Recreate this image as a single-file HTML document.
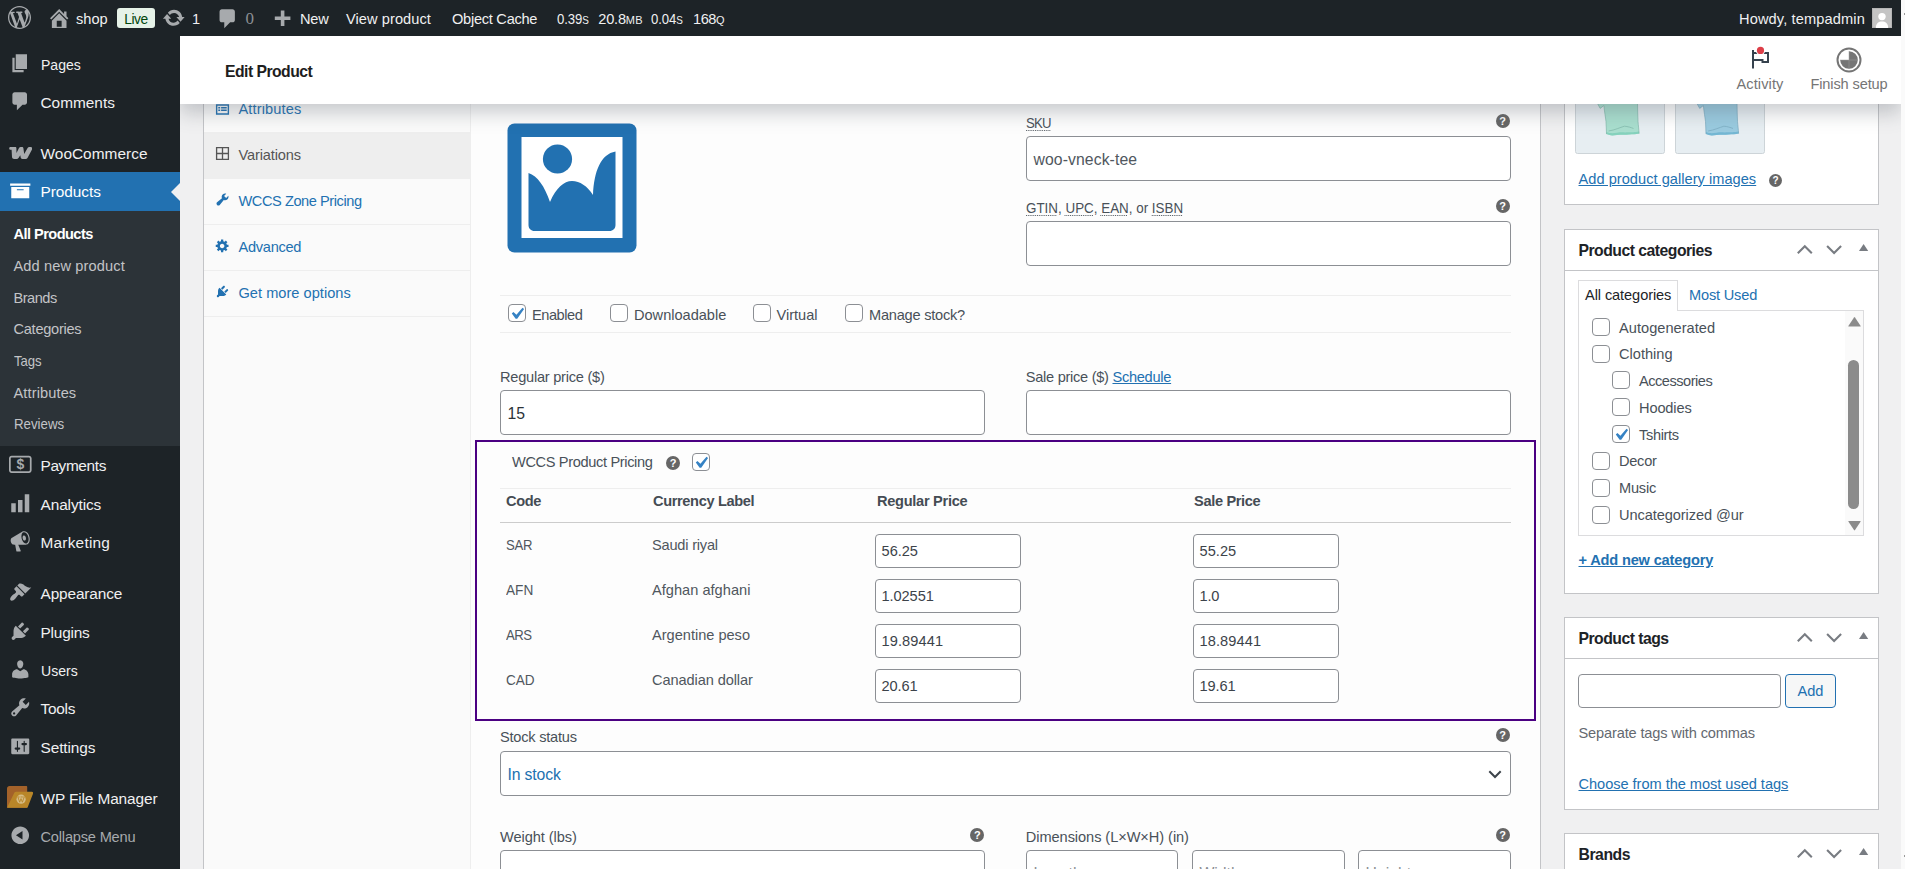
<!DOCTYPE html>
<html lang="en"><head>
<meta charset="utf-8">
<title>Edit product “V-Neck T-Shirt” ‹ shop — WordPress</title>
<style>
*{box-sizing:border-box;margin:0;padding:0}
html,body{width:1905px;height:869px;overflow:hidden;background:#fafafa;font-family:"Liberation Sans",sans-serif;color:#3c434a}
#root{position:absolute;left:0;top:0;width:1901px;height:869px;overflow:hidden;background:#f0f0f1}
a{color:#2271b1}
svg{display:block}
/* ---------- admin bar ---------- */
#wpadminbar{position:absolute;left:0;top:0;width:1901px;height:36px;background:#1d2327;color:#f0f0f1;font-size:14.6px;z-index:30}
#wpadminbar .t{position:absolute;top:0;line-height:39px;white-space:nowrap;color:#f0f0f1}
#wpadminbar .ic{position:absolute}
#wpadminbar .live{position:absolute;left:117px;top:8px;width:38px;height:20px;border-radius:3px;background:#e6f2e8;color:#00450c;font-size:13.8px;line-height:23px;text-align:center}
#wpadminbar .dim{color:#a7aaad}
#wpadminbar small{font-size:11px;letter-spacing:.2px}
/* ---------- side menu ---------- */
#adminmenu{position:absolute;left:0;top:36px;width:180px;height:833px;background:#1d2327;z-index:20}
#adminmenu .mi{position:absolute;left:0;width:180px;height:38px;color:#f0f0f1;font-size:15.4px;line-height:40.4px;white-space:nowrap}
#adminmenu .mi span{position:absolute;left:40.5px;top:0}
#adminmenu .mi svg{position:absolute;left:9px;top:7px;width:22.5px;height:22.5px;fill:#a7aaad}
#adminmenu .cur{background:#2271b1;color:#fff}
#adminmenu .cur svg{fill:#fff}
#adminmenu .cur:after{content:"";position:absolute;right:0;top:10.5px;border:9px solid transparent;border-right-color:#f0f0f1}
#adminmenu .sub{position:absolute;left:0;top:174.5px;width:180px;height:235.5px;background:#2c3338}
#adminmenu .sub div{position:absolute;left:13.5px;margin-top:.5px;font-size:14.6px;color:#c3c4c7;white-space:nowrap;line-height:20px}
#adminmenu .sub div.on{color:#fff;font-weight:bold}
/* ---------- woo header ---------- */
#woohead{position:absolute;left:180px;top:36px;width:1721px;height:68px;background:#fff;z-index:10;box-shadow:0 9px 18px 0 rgba(85,93,102,.3)}
#woohead h1{position:absolute;left:45px;top:0;line-height:71px;font-size:15.75px;letter-spacing:-.45px;font-weight:bold;color:#1e1e1e;white-space:nowrap}
#woohead .btn{position:absolute;top:0;height:68px;color:#757575;font-size:14.6px;text-align:center;white-space:nowrap}
#woohead .btn span{position:absolute;left:0;right:0;top:38px;line-height:20px}

/* ---------- product data box ---------- */
#pdata{position:absolute;left:203px;top:60px;width:1338px;height:900px;background:#fff;border:1px solid #c3c4c7}
#tabs{position:absolute;left:0;top:0;width:267px;height:900px;background:#fafafa;border-right:1px solid #eee}
#tabs .tab{position:absolute;left:0;width:266px;height:46px;border-bottom:1px solid #eee;color:#2271b1;font-size:14.6px;line-height:45px;white-space:nowrap}
#tabs .tab span{position:absolute;left:34.500px;top:0}
#tabs .tab svg{position:absolute;left:10.8px;top:12.8px;width:15px;height:15px;fill:#2271b1}
#tabs .tab.act{background:#eee;color:#555}
#tabs .tab.act svg{fill:#555}
#panel{position:absolute;left:267px;top:0;width:1069px;height:900px;background:#fdfdfd}
.lbl{position:absolute;font-size:14.6px;color:#495159;white-space:nowrap;line-height:20px}
.lbl u{text-decoration:underline dotted;text-decoration-thickness:1px;text-underline-offset:2px}
.inp{position:absolute;background:#fff;border:1px solid #8c8f94;border-radius:4px;font-size:15.75px;color:#50575e;white-space:nowrap;padding-left:6.5px}
.help{position:absolute;width:14px;height:14px;border-radius:50%;background:#666;color:#fff;font-size:11px;font-weight:bold;line-height:14.5px;text-align:center}
.hr{position:absolute;height:1px;background:#eee}
.cb{position:absolute;width:18px;height:18px;border:1px solid #8c8f94;border-radius:4px;background:#fff}
.cb svg{position:absolute;left:-4.500px;top:-3.400px;width:23.600px;height:23.600px}
#wccs{position:absolute;left:271px;top:379px;width:1061px;height:281px;border:2px solid #4b0082}
#wccs .th{position:absolute;top:47.7px;letter-spacing:-.3px;font-size:14.6px;font-weight:bold;color:#454c54;line-height:20px;white-space:nowrap}
#wccs .td{position:absolute;font-size:14.6px;color:#50575e;line-height:20px;white-space:nowrap}
#wccs .in{position:absolute;width:146px;height:34px;background:#fff;border:1px solid #8c8f94;border-radius:4px;font-size:14.6px;color:#3c434a;line-height:32.6px;padding-left:5.6px}

/* ---------- right column ---------- */
.pbox{position:absolute;left:1564px;width:315px;background:#fff;border:1px solid #c3c4c7}
.pbox .hd{position:absolute;left:0;top:0;width:313px;height:41px;border-bottom:1px solid #c3c4c7}
.pbox h2{position:absolute;left:13.500px;top:0;line-height:41px;font-size:15.75px;font-weight:bold;color:#1d2327;white-space:nowrap}
.pbox .ar{position:absolute;top:13px;left:232px;width:72px;height:14px}
.rt{position:absolute;font-size:14.6px;line-height:20px;white-space:nowrap;color:#495159}
.rt a{text-decoration:underline}
#catlist .cb{width:18px;height:18px}
#catlist .rt{color:#495159}
</style>
</head>
<body>
<div id="root">

<!-- ============ ADMIN BAR ============ -->
<div id="wpadminbar">
  <svg class="ic" style="left:8px;top:6px;width:23px;height:23px" viewBox="0 0 20 20" fill="#a7aaad"><path d="M20 10c0-5.51-4.49-10-10-10C4.48 0 0 4.49 0 10c0 5.52 4.48 10 10 10c5.51 0 10-4.48 10-10zM7.78 15.37L4.37 6.22c.55-.02 1.17-.08 1.17-.08c.5-.06.44-1.13-.06-1.11c0 0-1.45.11-2.37.11c-.18 0-.37 0-.58-.01C4.12 2.69 6.87 1.11 10 1.11c2.33 0 4.45.87 6.05 2.34c-.68-.11-1.65.39-1.65 1.58c0 .74.45 1.36.9 2.1c.35.61.55 1.36.55 2.46c0 1.49-1.4 5-1.4 5l-3.03-8.37c.54-.02.82-.17.82-.17c.5-.05.44-1.25-.06-1.22c0 0-1.44.12-2.38.12c-.87 0-2.33-.12-2.33-.12c-.5-.03-.56 1.2-.06 1.22l.92.08l1.26 3.41zM17.41 10c.24-.64.74-1.87.43-4.25c.7 1.29 1.05 2.71 1.05 4.25c0 3.29-1.73 6.24-4.4 7.78c.97-2.59 1.94-5.2 2.92-7.78zM6.1 18.09C3.12 16.65 1.11 13.53 1.11 10c0-1.3.23-2.48.72-3.59C3.25 10.3 4.67 14.2 6.1 18.09zm4.03-6.63l2.58 6.98c-.86.29-1.76.45-2.71.45c-.79 0-1.57-.11-2.29-.33c.81-2.38 1.62-4.74 2.42-7.1z"></path></svg>
  <svg class="ic" style="left:46.8px;top:5.6px;width:24.4px;height:24.4px" viewBox="0 0 20 20" fill="#a7aaad"><path d="M16 8.5l1.53 1.53-1.06 1.06L10 4.62l-6.47 6.47-1.06-1.06L10 2.5l4 4v-2h2v4zM10 6.04l6 5.99V18H4v-5.97zM12 17v-5H8v5h4z"></path></svg>
  <div class="t" style="left: 76px; letter-spacing: -0.014px;">shop</div>
  <div class="live" style="letter-spacing: -0.478px;">Live</div>
  <svg class="ic" style="left:162.4px;top:5.6px;width:23.6px;height:23.6px" viewBox="0 0 20 20" fill="#a7aaad"><path d="M10.2 3.28c3.53 0 6.43 2.61 6.92 6h2.08l-3.5 4-3.5-4h2.32c-.45-1.97-2.21-3.45-4.32-3.45-1.45 0-2.73.71-3.54 1.78L4.95 5.66C6.23 4.2 8.11 3.28 10.2 3.28zm-.4 13.44c-3.52 0-6.43-2.61-6.92-6H.8l3.5-4c1.17 1.33 2.33 2.67 3.5 4H5.48c.45 1.97 2.21 3.45 4.32 3.45 1.45 0 2.73-.71 3.54-1.78l1.71 1.95c-1.28 1.46-3.15 2.38-5.25 2.38z"></path></svg>
  <div class="t" style="left:192px">1</div>
  <svg class="ic" style="left:216.4px;top:6.6px;width:23.6px;height:23.6px" viewBox="0 0 20 20" fill="#a7aaad"><path d="M5 2h9c1.1 0 2 .9 2 2v7c0 1.1-.9 2-2 2h-2l-5 5v-5H5c-1.1 0-2-.9-2-2V4c0-1.1.9-2 2-2z"></path></svg>
  <div class="t dim" style="left:245.5px;font-family:'Liberation Serif',serif;font-size:17px;color:#8c8f94;line-height:38px">0</div>
  <svg class="ic" style="left:270px;top:7.7px;width:24px;height:24px" viewBox="0 0 20 20" fill="#a7aaad"><path d="M17 7v3h-5v5H9v-5H4V7h5V2h3v5h5z"></path></svg>
  <div class="t" style="left: 300px; letter-spacing: -0.234px;">New</div>
  <div class="t" style="left: 346px; letter-spacing: 0.074px;">View product</div>
  <div class="t" style="left: 452px; letter-spacing: -0.268px;">Object Cache</div>
  <div class="t" style="left: 557px; letter-spacing: -0.057px; transform: scaleX(0.9); transform-origin: 0px 50%;">0.39<small>S</small></div><div class="t" style="left: 598.3px; letter-spacing: -0.235px;">20.8<small>MB</small></div><div class="t" style="left: 651.2px; letter-spacing: -0.057px; transform: scaleX(0.9); transform-origin: 0px 50%;">0.04<small>S</small></div><div class="t" style="left: 693px; letter-spacing: -0.456px;">168<small>Q</small></div>
  <div class="t" style="left: 1739px; letter-spacing: 0.129px;">Howdy, tempadmin</div>
  <svg class="ic" style="left:1872px;top:8px;width:20px;height:20px" viewBox="0 0 20 20"><rect width="20" height="20" fill="#c4c4c4"></rect><rect x=".5" y=".5" width="19" height="19" fill="none" stroke="#b5b5b5"></rect><circle cx="10" cy="8.600" r="3.700" fill="#fff"></circle><path d="M3.800 20c0-4.800 2.800-6.600 6.200-6.600s6.200 1.800 6.200 6.600z" fill="#fff"></path></svg>
</div>

<!-- ============ SIDE MENU ============ -->
<div id="adminmenu">
  <div class="mi" style="top:9px"><svg viewBox="0 0 20 20"><path d="M6 15V2h10v13H6zm-1 1h8v2H3V5h2v11z"></path></svg><span style="letter-spacing: 0px; transform: scaleX(0.912); transform-origin: 0px 50%;">Pages</span></div>
  <div class="mi" style="top:47px"><svg viewBox="0 0 20 20"><path d="M5 2h9c1.1 0 2 .9 2 2v7c0 1.1-.9 2-2 2h-2l-5 5v-5H5c-1.1 0-2-.9-2-2V4c0-1.1.9-2 2-2z"></path></svg><span style="letter-spacing: -0.001px;">Comments</span></div>
  <div class="mi" style="top:98px"><svg viewBox="0 0 23.4 12" style="left:8.8px;top:13px;width:23.4px;height:12px"><path d="M.2 1.400C.2.5.9 0 1.800 0h4.500c.7 0 1.100.5 1.100 1.200l.1 4.900L10 .9c.4-.6 1-.9 1.700-.9h1.200c.9 0 1.400.5 1.500 1.300l.8 5.600 3.400-5.900c.4-.7 1-1 1.700-1h1.400c1.300 0 2 1.100 1.400 2.300l-4.600 8.600c-.4.7-1 1.100-1.800 1.100h-3.300c-1 0-1.600-.5-1.700-1.400l-.4-2.400-1.800 2.700c-.4.7-1 1.100-1.800 1.100H5.200c-1.300 0-2.100-.7-2.200-2L2.600 2.700h-1C.8 2.700.2 2.200.2 1.400z"></path></svg><span style="letter-spacing: 0.034px;">WooCommerce</span></div>
  <div class="mi cur" style="top:136px;height:38.5px"><svg viewBox="0 0 20 20"><path d="M19 4v2H1V4h18zM2 7h16v10H2V7zm11 3V9H7v1h6z"></path></svg><span style="letter-spacing: -0.056px;">Products</span></div>
  <div class="sub">
    <div class="on" style="top: 13px; letter-spacing: -0.554px;">All Products</div>
    <div style="top: 45px; letter-spacing: 0.125px;">Add new product</div>
    <div style="top: 77px; letter-spacing: -0.492px;">Brands</div>
    <div style="top: 108px; letter-spacing: -0.268px;">Categories</div>
    <div style="top: 140px; letter-spacing: -0.096px; transform: scaleX(0.9); transform-origin: 0px 50%;">Tags</div>
    <div style="top: 172px; letter-spacing: 0.114px;">Attributes</div>
    <div style="top: 203px; letter-spacing: 0px; transform: scaleX(0.91); transform-origin: 0px 50%;">Reviews</div>
  </div>
  <div class="mi" style="top:410px"><svg viewBox="0 0 20 20" style="left:7.2px;top:5px;width:26.6px;height:26.6px"><path fill-rule="evenodd" d="M3.500 3.500h13c1.100 0 2 .9 2 2v9c0 1.100-.9 2-2 2h-13c-1.100 0-2-.9-2-2v-9c0-1.100.9-2 2-2zm0 1.300c-.4 0-.7.3-.7.7v9c0 .4.3.7.7.7h13c.4 0 .7-.3.7-.7v-9c0-.4-.3-.7-.7-.7h-13z"></path></svg><b style="position:absolute;left:16.4px;top:0;font-size:14px;color:#a7aaad;line-height:37.6px">$</b><span style="letter-spacing: -0.367px;">Payments</span></div>
  <div class="mi" style="top:449px"><svg viewBox="0 0 20 20"><path d="M18 18V2h-4v16h4zm-6 0V7H8v11h4zm-6 0v-8H2v8h4z"></path></svg><span style="letter-spacing: -0.099px;">Analytics</span></div>
  <div class="mi" style="top:487px"><svg viewBox="0 0 20 20"><path d="M18.150 5.940c.460 1.620.380 3.220-.020 4.480-.420 1.280-1.260 2.180-2.300 2.480-.160.060-.260.060-.400.060-.060.020-.120.020-.180.020-.060.020-.140.020-.220.020h-6.800l2.220 5.500c.020.140-.060.260-.140.340-.080.100-.240.160-.340.160H6.950c-.1 0-.26-.06-.34-.16-.08-.08-.16-.2-.14-.34l-1-5.500H4.250l-.02-.02c-.5.06-1.080-.18-1.540-.62s-.88-1.080-1.060-1.880c-.24-.8-.2-1.560-.02-2.200.18-.62.580-1.080 1.060-1.300l.02-.02 9-5.400c.1-.06.180-.1.240-.16.060-.04.140-.08.240-.12.160-.08.280-.12.500-.18 1.040-.3 2.240.1 3.220.98 1.020.9 1.820 2.240 2.260 3.860zm-2.580 5.980h-.02c.4-.1.740-.34 1.040-.7.580-.7.860-1.760.86-3.040 0-.64-.1-1.300-.28-1.980-.34-1.360-1.020-2.500-1.780-3.240s-1.680-1.100-2.460-.88c-.82.220-1.400.96-1.700 2-.32 1.040-.28 2.360.06 3.720.38 1.360 1 2.500 1.800 3.240.78.740 1.620 1.100 2.480.88zm-2.540-7.080c.22-.04.420-.02.620.04.380.16.760.48 1.020 1s.42 1.200.42 1.780c0 .3-.04.56-.12.8-.18.480-.44.840-.86.940-.34.100-.8-.06-1.140-.4s-.64-.86-.78-1.500c-.18-.62-.12-1.240.02-1.720s.48-.84.82-.94z"></path></svg><span style="letter-spacing: 0.225px;">Marketing</span></div>
  <div class="mi" style="top:538px"><svg viewBox="0 0 20 20"><path d="M14.480 11.060L7.410 3.990l1.500-1.500c.5-.56 2.300-.47 3.510.32 1.210.8 1.430 1.280 2.910 2.100 1.180.64 2.450 1.260 4.450.85zm-.71.71L6.700 4.700 4.930 6.470c-.39.39-.39 1.020 0 1.410l1.060 1.060c.39.39.39 1.030 0 1.420-.6.6-1.430 1.110-2.210 1.690-.35.26-.7.53-1.010.84C1.430 14.230.4 16.080 1.400 17.070c.99 1 2.840-.03 4.180-1.360.31-.31.580-.66.850-1.020.57-.78 1.080-1.610 1.690-2.210.39-.39 1.020-.39 1.410 0l1.060 1.060c.39.39 1.020.39 1.410 0z"></path></svg><span style="letter-spacing: -0.132px;">Appearance</span></div>
  <div class="mi" style="top:577px"><svg viewBox="0 0 20 20"><path d="M13.110 4.360L9.870 7.600 8 5.730l3.240-3.240c.35-.34 1.050-.2 1.560.32.520.51.660 1.210.31 1.550zm-8 1.770l.91-1.120 9.010 9.010-1.190.84c-.71.71-2.630 1.160-3.820 1.160H6.140L4.900 17.260c-.59.59-1.540.59-2.120 0-.59-.58-.59-1.530 0-2.120l1.240-1.240v-3.880c0-1.130.4-3.190 1.090-3.890zm7.260 3.970l3.240-3.240c.34-.35 1.040-.21 1.550.31.520.51.660 1.210.31 1.550l-3.240 3.250z"></path></svg><span style="letter-spacing: -0.198px;">Plugins</span></div>
  <div class="mi" style="top:615px"><svg viewBox="0 0 20 20"><path d="M10 9.250c-2.270 0-2.730-3.440-2.730-3.440C7 4.020 7.820 2 9.970 2c2.160 0 2.980 2.020 2.710 3.810 0 0-.41 3.440-2.680 3.440zm0 2.570L12.720 10c2.390 0 4.520 2.330 4.520 4.530v2.490s-3.650 1.130-7.240 1.130c-3.650 0-7.240-1.130-7.240-1.130v-2.490c0-2.250 1.940-4.480 4.470-4.480z"></path></svg><span style="letter-spacing: 0px; transform: scaleX(0.913); transform-origin: 0px 50%;">Users</span></div>
  <div class="mi" style="top:653px"><svg viewBox="0 0 20 20"><path d="M16.680 9.770c-1.340 1.340-3.300 1.670-4.950.99l-5.410 6.520c-.99.99-2.590.99-3.580 0s-.99-2.590 0-3.570l6.520-5.420c-.68-1.650-.35-3.610.99-4.950 1.280-1.280 3.120-1.620 4.720-1.060l-2.890 2.890 2.820 2.820 2.860-2.870c.53 1.580.18 3.390-1.080 4.650zM3.810 16.210c.4.39 1.040.39 1.430 0 .4-.4.4-1.040 0-1.430-.39-.4-1.030-.4-1.430 0-.39.39-.39 1.030 0 1.430z"></path></svg><span style="letter-spacing: -0.267px;">Tools</span></div>
  <div class="mi" style="top:692px"><svg viewBox="0 0 20 20"><path d="M18 16V4c0-.55-.45-1-1-1H3c-.55 0-1 .45-1 1v12c0 .55.45 1 1 1h14c.55 0 1-.45 1-1zM8 11h1c.55 0 1 .45 1 1s-.45 1-1 1H8v1.500c0 .28-.22.5-.5.5s-.5-.22-.5-.5V13H6c-.55 0-1-.45-1-1s.45-1 1-1h1V5.500c0-.28.22-.5.5-.5s.5.22.5.5V11zm5-2h-1c-.55 0-1-.45-1-1s.45-1 1-1h1V5.500c0-.28.22-.5.5-.5s.5.22.5.5V7h1c.55 0 1 .45 1 1s-.45 1-1 1h-1v5.500c0 .28-.22.5-.5.5s-.5-.22-.5-.5V9z"></path></svg><span style="letter-spacing: -0.091px;">Settings</span></div>
  <div class="mi" style="top:743px"><svg viewBox="0 0 26.2 21.8" style="left:6.9px;top:7.2px;width:26.2px;height:21.8px"><path d="M0 2.500C0 1.100 1.100 0 2.500 0h16.700c.6 0 1 .4 1 1v20.800H1c-.6 0-1-.4-1-1z" fill="#a3622a"></path><path d="M9.200 5.800h15.700c1 0 1.600.9 1.200 1.800l-5.300 13.300c-.2.600-.8.900-1.400.9H0l7.300-15c.4-.6 1.100-1 1.900-1z" fill="#b98628"></path><circle cx="14.100" cy="13.200" r="4.600" fill="#d6bd86"></circle><path d="M11 11.300l1.700 4.900 1.300-3.600 1.400 3.600 1.700-4.900M10.600 11h2M13.500 11h2.300M16.300 11h1.500" fill="none" stroke="#b98628" stroke-width=".9"></path></svg><span style="letter-spacing: -0.114px;">WP File Manager</span></div>
  <div class="mi" style="top:781px;color:#a7aaad"><svg viewBox="0 0 20 20"><path d="M10 2.160c4.330 0 7.840 3.510 7.840 7.840s-3.510 7.840-7.840 7.840S2.160 14.330 2.160 10 5.670 2.160 10 2.160zm2 11.720V6.120L6.180 9.970z"></path></svg><span style="font-size: 14.6px; letter-spacing: -0.189px;">Collapse Menu</span></div>
</div>

<!-- ============ WOO HEADER ============ -->
<div id="woohead">
  <h1 style="letter-spacing: -0.535px;">Edit Product</h1>
  <div class="btn" style="left:1545px;width:70px">
    <svg style="position:absolute;left:25px;top:10px;width:22px;height:24px" viewBox="0 0 22 24"><rect x="2" y="4" width="2" height="18.5" fill="#36424e"></rect><path d="M4 7H18V16H12.5V13.9H4" stroke="#36424e" stroke-width="2" fill="none"></path><circle cx="10.5" cy="4.4" r="4.7" fill="#fff"></circle><circle cx="10.5" cy="4.4" r="3.6" fill="#dd3e48"></circle></svg>
    <span style="letter-spacing: 0.098px;">Activity</span>
  </div>
  <div class="btn" style="left:1622px;width:94px">
    <svg style="position:absolute;left:34.4px;top:10.8px;width:26px;height:26px" viewBox="0 0 26 26"><circle cx="13" cy="13" r="11.5" fill="none" stroke="#757575" stroke-width="2"></circle><path d="M13 13V4.200A8.800 8.800 0 1 1 4.200 13z" fill="#757575"></path><path d="M13 4v18M4 13h18" stroke="#9e9e9e" stroke-width=".5"></path></svg>
    <span style="letter-spacing: -0.141px;">Finish setup</span>
  </div>
</div>


<div id="pdata">
  <div id="tabs">
    <div class="tab" style="top:26px"><svg viewBox="0 0 16 16" style="top:14.6px"><path fill-rule="evenodd" d="M1 2.500h14v11H1zM2.500 4v8h11V4zM3.500 5.200h2v1.600h-2zM6.500 5.200h6v1.600h-6zM3.500 8h2v1.600h-2zM6.500 8h6v1.600h-6z"></path></svg><span style="letter-spacing: 0.134px;">Attributes</span></div>
    <div class="tab act" style="top:72px"><svg viewBox="0 0 16 16"><path fill-rule="evenodd" d="M1 1h14v14H1zM2.400 2.400v4.900h4.900V2.400zM8.700 2.400v4.900h4.900V2.400zM2.400 8.700v4.900h4.900V8.700zM8.700 8.700v4.900h4.900V8.700z"></path></svg><span style="letter-spacing: -0.141px;">Variations</span></div>
    <div class="tab" style="top:118px"><svg viewBox="0 0 20 20"><path d="M16.680 9.770c-1.340 1.340-3.300 1.670-4.950.99l-5.410 6.520c-.99.99-2.590.99-3.580 0s-.99-2.590 0-3.570l6.520-5.420c-.68-1.650-.35-3.610.99-4.950 1.280-1.280 3.120-1.620 4.720-1.060l-2.890 2.890 2.820 2.820 2.860-2.870c.53 1.580.18 3.390-1.080 4.650z"></path></svg><span style="letter-spacing: -0.44px;">WCCS Zone Pricing</span></div>
    <div class="tab" style="top:164px"><svg viewBox="0 0 20 20"><path d="M18 12h-2.180c-.17.7-.44 1.350-.81 1.930l1.540 1.540-2.100 2.100-1.540-1.540c-.58.36-1.230.63-1.910.79V19H8v-2.180c-.68-.16-1.330-.43-1.910-.79l-1.540 1.540-2.120-2.120 1.540-1.540c-.36-.58-.63-1.230-.79-1.910H1V9.030h2.170c.16-.7.440-1.350.8-1.940L2.430 5.550l2.100-2.100 1.540 1.540c.58-.37 1.240-.64 1.930-.81V2h3v2.180c.68.160 1.330.43 1.910.79l1.540-1.540 2.120 2.120-1.540 1.540c.36.59.64 1.240.8 1.940H18V12zm-8.500 1.500c1.660 0 3-1.340 3-3s-1.340-3-3-3-3 1.340-3 3 1.340 3 3 3z"></path></svg><span style="letter-spacing: -0.278px;">Advanced</span></div>
    <div class="tab" style="top:210px"><svg viewBox="0 0 20 20"><path d="M13.110 4.360L9.870 7.600 8 5.730l3.240-3.240c.35-.34 1.050-.2 1.560.32.520.51.660 1.210.31 1.550zm-8 1.770l.91-1.120 9.010 9.010-1.190.84c-.71.71-2.630 1.160-3.820 1.160H6.140L4.900 17.260c-.59.59-1.540.59-2.120 0-.59-.58-.59-1.530 0-2.120l1.240-1.240v-3.880c0-1.130.4-3.190 1.090-3.890zm7.260 3.970l3.240-3.240c.34-.35 1.040-.21 1.550.31.520.51.660 1.210.31 1.550l-3.240 3.250z"></path></svg><span style="letter-spacing: 0.022px;">Get more options</span></div>
  </div>
  <div id="panel">
    <!-- coordinates inside #panel: panel origin = (471,61) in page -->
    <svg style="position:absolute;left:36px;top:62px;width:130px;height:130px" viewBox="0 0 130 130"><rect x=".5" y=".5" width="129" height="129" rx="7" fill="#2271b1"></rect><rect x="14.500" y="14" width="101" height="101" fill="#fff"></rect><circle cx="50.500" cy="36" r="14.600" fill="#2271b1"></circle><path d="M21.500 50c9 3 16 13 21.500 29 6-14 14-21 22-21 8 0 15 5 21 14 1-24 8-41 22.500-43.500V102c0 3.500-2.500 6-6 6H27.500c-3.500 0-6-2.500-6-6z" fill="#2271b1"></path></svg>

    <div class="lbl" style="left:555px;top:52px"><u style="letter-spacing: -0.783px; display: inline-block; transform: scaleX(0.9); transform-origin: 0px 50%;">SKU</u></div>
    <div class="help" style="left:1024.7px;top:53.1px">?</div>
    <div class="inp" style="left: 555px; top: 75px; width: 485px; height: 45px; line-height: 45.5px; letter-spacing: 0.091px;">woo-vneck-tee</div>
    <div class="lbl" style="left: 555px; top: 137px; letter-spacing: 0px; transform: scaleX(0.918); transform-origin: 0px 50%;"><u>GTIN</u>, <u>UPC</u>, <u>EAN</u>, or <u>ISBN</u></div>
    <div class="help" style="left:1024.7px;top:138.1px">?</div>
    <div class="inp" style="left:555px;top:160px;width:485px;height:45px"></div>

    <div class="hr" style="left:29px;top:234px;width:1011px"></div>
    <div class="cb on" style="left:37px;top:243px"><svg viewBox="0 0 20 20"><path d="M14.83 4.89l1.340.94-5.810 8.380H9.020L5.780 9.670l1.340-1.250 2.570 2.400z" fill="#3582c4"></path></svg></div><div class="lbl" style="left: 61px; top: 243.7px; letter-spacing: -0.452px;">Enabled</div>
    <div class="cb" style="left:139px;top:243px"></div><div class="lbl" style="left: 163px; top: 243.7px; letter-spacing: -0.017px;">Downloadable</div>
    <div class="cb" style="left:282px;top:243px"></div><div class="lbl" style="left: 305.5px; top: 243.7px; letter-spacing: -0.001px;">Virtual</div>
    <div class="cb" style="left:374px;top:243px"></div><div class="lbl" style="left: 398px; top: 243.7px; letter-spacing: -0.23px;">Manage stock?</div>
    <div class="hr" style="left:29px;top:271px;width:1011px"></div>

    <div class="lbl" style="left: 29px; top: 306px; letter-spacing: -0.246px;">Regular price ($)</div>
    <div class="inp" style="left:29px;top:329px;width:485px;height:45px;line-height:45.5px;color:#2c3338">15</div>
    <div class="lbl" style="left: 554.8px; top: 306px; letter-spacing: -0.278px;">Sale price ($) <a style="text-decoration:underline">Schedule</a></div>
    <div class="inp" style="left:555px;top:329px;width:485px;height:45px"></div>

    <div class="lbl" style="left: 29px; top: 666px; letter-spacing: -0.233px;">Stock status</div>
    <div class="help" style="left:1024.7px;top:667px">?</div>
    <div class="inp" style="left: 29px; top: 690px; width: 1011px; height: 45px; line-height: 45.5px; color: rgb(34, 113, 177); letter-spacing: -0.135px;">In stock</div>
    <svg style="position:absolute;left:1016.6px;top:708.5px;width:14px;height:9px" viewBox="0 0 14 9"><path d="M1.300 1.300l5.700 5.700 5.700-5.700" fill="none" stroke="#3c434a" stroke-width="2"></path></svg>

    <div class="lbl" style="left: 29px; top: 766px; letter-spacing: -0.074px;">Weight (lbs)</div>
    <div class="help" style="left:499.4px;top:767px">?</div>
    <div class="inp" style="left:29px;top:789px;width:485px;height:45px"></div>
    <div class="lbl" style="left: 554.8px; top: 766px; letter-spacing: -0.066px;">Dimensions (L×W×H) (in)</div>
    <div class="help" style="left:1024.7px;top:767px">?</div>
    <div class="inp" style="left:555px;top:789px;width:152px;height:45px;line-height:45.5px;color:#8c8f94">Length</div>
    <div class="inp" style="left:721px;top:789px;width:152.5px;height:45px;line-height:45.5px;color:#8c8f94">Width</div>
    <div class="inp" style="left:887px;top:789px;width:153px;height:45px;line-height:45.5px;color:#8c8f94">Height</div>
  </div>

  <div id="wccs"><div style="position:absolute;left:1px;top:1px">
    <!-- origin = (478,443) page (inside border) -->
    <div class="lbl" style="left: 34px; top: 9px; letter-spacing: -0.355px;">WCCS Product Pricing</div>
    <div class="help" style="left:188px;top:13px">?</div>
    <div class="cb on" style="left:214px;top:10px"><svg viewBox="0 0 20 20"><path d="M14.83 4.89l1.340.94-5.810 8.380H9.020L5.780 9.670l1.340-1.250 2.570 2.400z" fill="#3582c4"></path></svg></div>
    <div class="hr" style="left:22px;top:45px;width:1011px"></div>
    <div class="th" style="left: 28px; letter-spacing: -0.396px;">Code</div>
    <div class="th" style="left: 175px; letter-spacing: -0.361px;">Currency Label</div>
    <div class="th" style="left: 399px; letter-spacing: -0.284px;">Regular Price</div>
    <div class="th" style="left: 716px; letter-spacing: -0.338px;">Sale Price</div>
    <div class="hr" style="left:22px;top:79px;width:1011px;background:#ccc"></div>

    <div class="td" style="left: 28px; top: 92px; letter-spacing: -0.264px; transform: scaleX(0.9); transform-origin: 0px 50%;">SAR</div><div class="td" style="left: 174px; top: 92px; letter-spacing: -0.204px;">Saudi riyal</div>
    <div class="in" style="left: 397px; top: 91px; letter-spacing: -0.046px;">56.25</div><div class="in" style="left: 715px; top: 91px; letter-spacing: 0.014px;">55.25</div>
    <div class="td" style="left: 28px; top: 137px; letter-spacing: 0px; transform: scaleX(0.935); transform-origin: 0px 50%;">AFN</div><div class="td" style="left: 174px; top: 137px; letter-spacing: 0.015px;">Afghan afghani</div>
    <div class="in" style="left: 397px; top: 136px; letter-spacing: -0.095px;">1.02551</div><div class="in" style="left: 715px; top: 136px; letter-spacing: -0.299px;">1.0</div>
    <div class="td" style="left: 28px; top: 182px; letter-spacing: -0.524px; transform: scaleX(0.9); transform-origin: 0px 50%;">ARS</div><div class="td" style="left: 174px; top: 182px; letter-spacing: -0.013px;">Argentine peso</div>
    <div class="in" style="left: 397px; top: 181px; letter-spacing: 0.078px;">19.89441</div><div class="in" style="left: 715px; top: 181px; letter-spacing: 0.078px;">18.89441</div>
    <div class="td" style="left: 28px; top: 227px; letter-spacing: 0px; transform: scaleX(0.931); transform-origin: 0px 50%;">CAD</div><div class="td" style="left: 174px; top: 227px; letter-spacing: -0.096px;">Canadian dollar</div>
    <div class="in" style="left: 397px; top: 226px; letter-spacing: -0.126px;">20.61</div><div class="in" style="left: 715px; top: 226px; letter-spacing: -0.106px;">19.61</div>
  </div></div>
</div>

<!-- gallery box (partially hidden by header) -->
<div class="pbox" style="top:20px;height:185px">
  <svg style="position:absolute;left:10px;top:42.5px;width:90px;height:90px" viewBox="0 0 90 90"><rect x=".5" y=".5" width="89" height="89" rx="2" fill="#e7eef2" stroke="#cdd4d8"></rect><g transform="translate(0 0)"><path d="M19.5 34L25.2 44.4 28.9 41.5C29.5 48 30.5 53 31 57.5 31.3 62 31.3 66 31.5 70.1 35 71.8 38 71.5 42 71 46 70.5 50 70.8 54 70.5 58 70.2 61 70.5 64.1 69.6 63.8 65 63.3 61 63 57.5 62.8 52 62.6 46 62.5 34z" fill="#a9dfcf"></path><path d="M31.5 70.1C35 71.8 38 71.5 42 71 46 70.5 50 70.8 54 70.5 58 70.2 61 70.5 64.1 69.6L64 67.6C60 68.6 57 68 53 68.3 49 68.6 46 68 42 68.7 38 69.3 35 69.5 31.4 68z" fill="#86d2bd"></path><path d="M33.6 67C40 66 45 63.5 49.4 62.2 53 62.5 56 63.5 58.5 64.5M28.9 41.5C29.5 48 30.5 53 31 57.5 31.3 62 31.3 66 31.5 70.1M64.1 69.6C63.8 65 63.3 61 63 57.5 62.8 52 62.6 46 62.5 40M19.5 34L25.2 44.4 28.9 41.5" stroke="#7fb8a9" stroke-width=".7" fill="none"></path></g></svg>
  <svg style="position:absolute;left:110px;top:42.5px;width:90px;height:90px" viewBox="0 0 90 90"><rect x=".5" y=".5" width="89" height="89" rx="2" fill="#e7eef2" stroke="#cdd4d8"></rect><g transform="translate(-0.5 0)"><path d="M19.5 34L25.2 44.4 28.9 41.5C29.5 48 30.5 53 31 57.5 31.3 62 31.3 66 31.5 70.1 35 71.8 38 71.5 42 71 46 70.5 50 70.8 54 70.5 58 70.2 61 70.5 64.1 69.6 63.8 65 63.3 61 63 57.5 62.8 52 62.6 46 62.5 34z" fill="#9acbe0"></path><path d="M31.5 70.1C35 71.8 38 71.5 42 71 46 70.5 50 70.8 54 70.5 58 70.2 61 70.5 64.1 69.6L64 67.6C60 68.6 57 68 53 68.3 49 68.6 46 68 42 68.7 38 69.3 35 69.5 31.4 68z" fill="#74b7d3"></path><path d="M33.6 67C40 66 45 63.5 49.4 62.2 53 62.5 56 63.5 58.5 64.5M28.9 41.5C29.5 48 30.5 53 31 57.5 31.3 62 31.3 66 31.5 70.1M64.1 69.6C63.8 65 63.3 61 63 57.5 62.8 52 62.6 46 62.5 40M19.5 34L25.2 44.4 28.9 41.5" stroke="#78a9bf" stroke-width=".7" fill="none"></path></g></svg>
  <div class="rt" style="left:13.500px;top:148px"><a style="letter-spacing: 0.033px;">Add product gallery images</a></div>
  <div class="help" style="left:204.1px;top:152.7px;width:13px;height:13px;line-height:13.5px;font-size:10px">?</div>
</div>

<!-- Product categories -->
<div class="pbox" style="top:229px;height:365px">
  <div class="hd"><h2 style="letter-spacing: -0.51px;">Product categories</h2>
    <svg class="ar" viewBox="0 0 72 14"><path d="M.8 10.300l7-7 7 7M30.100 2.900l7 7 7-7" fill="none" stroke="#787c82" stroke-width="2.100"></path><path d="M62 8l4.600-6.900 4.600 6.900z" fill="#787c82"></path></svg>
  </div>
  <div style="position:absolute;left:13px;top:50px;width:100px;height:31px;border:1px solid #dcdcde;border-bottom:none;background:#fff;z-index:2"></div>
  <div class="rt" style="left: 20px; top: 55px; color: rgb(29, 35, 39); z-index: 3; letter-spacing: -0.094px;">All categories</div>
  <div class="rt" style="left: 124px; top: 55px; color: rgb(34, 113, 177); letter-spacing: -0.183px;">Most Used</div>
  <div id="catlist" style="position:absolute;left:13px;top:80px;width:286px;height:226px;border:1px solid #dcdcde;background:#fff">
    <div class="cb" style="left:13px;top:7px"></div><div class="rt" style="left: 40px; top: 6.5px; letter-spacing: 0.026px;">Autogenerated</div>
    <div class="cb" style="left:13px;top:34px"></div><div class="rt" style="left: 40px; top: 33px; letter-spacing: -0.006px;">Clothing</div>
    <div class="cb" style="left:33px;top:60px"></div><div class="rt" style="left: 60px; top: 59.5px; letter-spacing: -0.488px;">Accessories</div>
    <div class="cb" style="left:33px;top:87px"></div><div class="rt" style="left: 60px; top: 87px; letter-spacing: -0.135px;">Hoodies</div>
    <div class="cb on" style="left:33px;top:114px"><svg viewBox="0 0 20 20"><path d="M14.83 4.89l1.340.94-5.810 8.380H9.020L5.780 9.670l1.340-1.250 2.570 2.400z" fill="#3582c4"></path></svg></div><div class="rt" style="left: 60px; top: 114px; letter-spacing: -0.353px;">Tshirts</div>
    <div class="cb" style="left:13px;top:141px"></div><div class="rt" style="left: 40px; top: 140px; letter-spacing: -0.268px;">Decor</div>
    <div class="cb" style="left:13px;top:168px"></div><div class="rt" style="left: 40px; top: 167px; letter-spacing: -0.202px;">Music</div>
    <div class="cb" style="left:13px;top:195px"></div><div class="rt" style="left: 40px; top: 194px; letter-spacing: -0.08px;">Uncategorized @ur</div>
    <!-- scrollbar -->
    <div style="position:absolute;right:0;top:0;width:18px;height:224px;background:#fafafa"></div>
    <svg style="position:absolute;right:2.500px;top:6.300px;width:13px;height:9.500px" viewBox="0 0 13 9.500"><path d="M.8 9.500Q0 9.500.5 8.700L6 .4Q6.500-.2 7 .4l5.500 8.300q.5.800-.3.800z" fill="#8b8b8b"></path></svg>
    <div style="position:absolute;right:4px;top:49px;width:11px;height:149px;border-radius:6px;background:#8b8b8b"></div>
    <svg style="position:absolute;right:2.500px;top:210.300px;width:13px;height:9.500px" viewBox="0 0 13 9.500"><path d="M.8 0Q0 0 .5.800L6 9.100q.5.600 1 0L12.500.8q.5-.8-.3-.8z" fill="#8b8b8b"></path></svg>
  </div>
  <div class="rt" style="left:13.500px;top:320px;font-weight:bold"><a style="letter-spacing: -0.174px;">+ Add new category</a></div>
</div>

<!-- Product tags -->
<div class="pbox" style="top:617px;height:193px">
  <div class="hd"><h2 style="letter-spacing: -0.514px;">Product tags</h2>
    <svg class="ar" viewBox="0 0 72 14"><path d="M.8 10.300l7-7 7 7M30.100 2.900l7 7 7-7" fill="none" stroke="#787c82" stroke-width="2.100"></path><path d="M62 8l4.600-6.900 4.600 6.900z" fill="#787c82"></path></svg>
  </div>
  <div style="position:absolute;left:13px;top:56px;width:203px;height:34px;border:1px solid #8c8f94;border-radius:4px;background:#fff"></div>
  <div style="position: absolute; left: 220px; top: 56px; width: 51px; height: 34px; border: 1px solid rgb(34, 113, 177); border-radius: 4px; background: rgb(246, 247, 247); color: rgb(34, 113, 177); font-size: 14.6px; line-height: 32px; text-align: center; letter-spacing: -0.056px;">Add</div>
  <div class="rt" style="left: 13.5px; top: 105px; color: rgb(100, 105, 112); letter-spacing: -0.147px;">Separate tags with commas</div>
  <div class="rt" style="left:13.500px;top:156px"><a style="letter-spacing: -0.037px;">Choose from the most used tags</a></div>
</div>

<!-- Brands -->
<div class="pbox" style="top:833px;height:100px">
  <div class="hd"><h2 style="letter-spacing: -0.461px;">Brands</h2>
    <svg class="ar" viewBox="0 0 72 14"><path d="M.8 10.300l7-7 7 7M30.100 2.900l7 7 7-7" fill="none" stroke="#787c82" stroke-width="2.100"></path><path d="M62 8l4.600-6.900 4.600 6.900z" fill="#787c82"></path></svg>
  </div>
</div>



</div>
<div style="position:absolute;left:1904px;top:13px;width:1px;height:2px;background:#9a9a9a"></div><div style="position:absolute;left:1904px;top:855px;width:1px;height:2px;background:#9a9a9a"></div>


</body></html>
